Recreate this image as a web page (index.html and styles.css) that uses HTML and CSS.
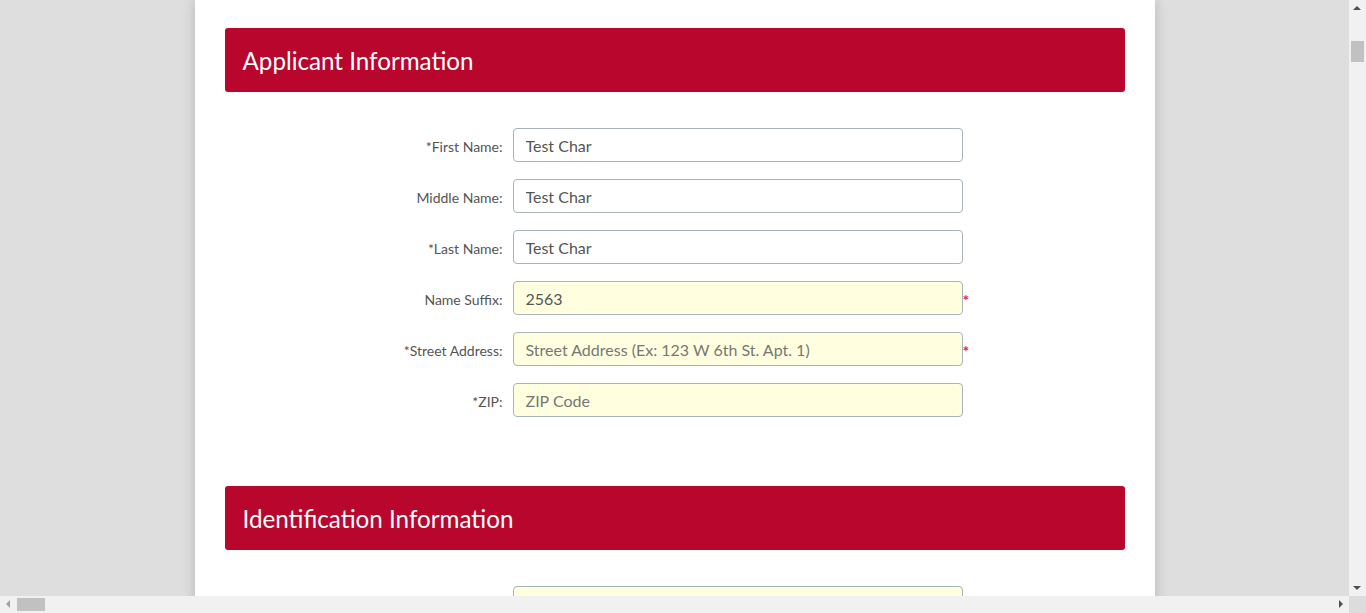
FILE: index.html
```html
<!DOCTYPE html>
<html lang="en">
<head>
<meta charset="utf-8">
<title>Application</title>
<link rel="stylesheet" href="styles.css">
</head>
<body>
<div class="main">
  <div class="sheet">
    <section class="section">
      <h2 class="section-title">Applicant Information</h2>
      <div class="form">
        <div class="row">
          <label class="label">*First Name:</label>
          <input class="field" type="text" value="Test Char">
          <span class="req"></span>
        </div>
        <div class="row">
          <label class="label">Middle Name:</label>
          <input class="field" type="text" value="Test Char">
          <span class="req"></span>
        </div>
        <div class="row">
          <label class="label">*Last Name:</label>
          <input class="field" type="text" value="Test Char">
          <span class="req"></span>
        </div>
        <div class="row">
          <label class="label">Name Suffix:</label>
          <input class="field field-warn" type="text" value="2563">
          <span class="req">*</span>
        </div>
        <div class="row">
          <label class="label">*Street Address:</label>
          <input class="field field-warn" type="text" placeholder="Street Address (Ex: 123 W 6th St. Apt. 1)">
          <span class="req">*</span>
        </div>
        <div class="row">
          <label class="label">*ZIP:</label>
          <input class="field field-warn" type="text" placeholder="ZIP Code">
          <span class="req"></span>
        </div>
      </div>
    </section>
    <section class="section section-next">
      <h2 class="section-title">Identification Information</h2>
      <div class="form">
        <div class="row">
          <label class="label"></label>
          <input class="field field-warn" type="text">
          <span class="req"></span>
        </div>
      </div>
    </section>
  </div>
</div>
<div class="vscroll">
  <div class="arrow arrow-up"></div>
  <div class="vthumb"></div>
  <div class="arrow arrow-down"></div>
</div>
<div class="hscroll">
  <div class="arrow arrow-left"></div>
  <div class="hthumb"></div>
  <div class="arrow arrow-right"></div>
</div>
<div class="corner"></div>
</body>
</html>
```
FILE: styles.css
```css
html, body {
  margin: 0;
  padding: 0;
  height: 100%;
  overflow: hidden;
}
body {
  background: #dedede;
  font-family: Lato, "Liberation Sans", sans-serif;
  color: #555;
}
.main {
  width: 1349px;
  height: 596px;
  overflow: hidden;
}
.sheet {
  width: 960px;
  margin: 0 auto;
  background: #fff;
  box-shadow: 0 0 12px rgba(0,0,0,0.18);
  padding: 28px 30px 40px;
  box-sizing: border-box;
  min-height: 700px;
}
.section-title {
  margin: 0;
  height: 64px;
  background: #b8062d;
  border-radius: 3px;
  color: #fff;
  font-weight: 400;
  font-size: 24.2px;
  line-height: 66px;
  padding-left: 18px;
}
.form {
  padding-top: 36px;
  display: flex;
  flex-direction: column;
  gap: 17px;
}
.section-next {
  margin-top: 69px;
}
.row {
  display: grid;
  grid-template-columns: 278px 450px 20px;
  column-gap: 10px;
  align-items: center;
}
.label {
  text-align: right;
  font-size: 14px;
  color: #555;
  padding-top: 2px;
}
.field {
  box-sizing: border-box;
  height: 34px;
  width: 450px;
  border: 1px solid #a9b3ba;
  border-radius: 4px;
  background: #fff;
  padding: 0 12px;
  font-family: Lato, "Liberation Sans", sans-serif;
  font-size: 16px;
  color: #555;
  outline: none;
}
.field::placeholder {
  color: #777;
}
.field-warn {
  background: #ffffdf;
}
.req {
  color: #e8243c;
  font-size: 16px;
  font-weight: 700;
  margin-left: -10px;
  line-height: 1;
  padding-top: 4px;
}
.vscroll {
  position: fixed;
  top: 0;
  right: 0;
  width: 17px;
  height: 596px;
  background: #f1f1f1;
}
.hscroll {
  position: fixed;
  left: 0;
  bottom: 0;
  width: 1349px;
  height: 17px;
  background: #f1f1f1;
}
.corner {
  position: fixed;
  right: 0;
  bottom: 0;
  width: 17px;
  height: 17px;
  background: #dcdcdc;
}
.vthumb {
  position: absolute;
  left: 2px;
  top: 41px;
  width: 13px;
  height: 21px;
  background: #c1c1c1;
}
.hthumb {
  position: absolute;
  left: 17px;
  top: 2px;
  width: 28px;
  height: 13px;
  background: #c1c1c1;
}
.arrow {
  position: absolute;
  width: 0;
  height: 0;
}
.arrow-up {
  left: 4px;
  top: 6px;
  border-left: 4px solid transparent;
  border-right: 4px solid transparent;
  border-bottom: 4px solid #505050;
}
.arrow-down {
  left: 4px;
  bottom: 6px;
  border-left: 4px solid transparent;
  border-right: 4px solid transparent;
  border-top: 4px solid #505050;
}
.arrow-left {
  left: 6px;
  top: 4px;
  border-top: 4px solid transparent;
  border-bottom: 4px solid transparent;
  border-right: 4px solid #a3a3a3;
}
.arrow-right {
  right: 6px;
  top: 4px;
  border-top: 4px solid transparent;
  border-bottom: 4px solid transparent;
  border-left: 4px solid #505050;
}
```
